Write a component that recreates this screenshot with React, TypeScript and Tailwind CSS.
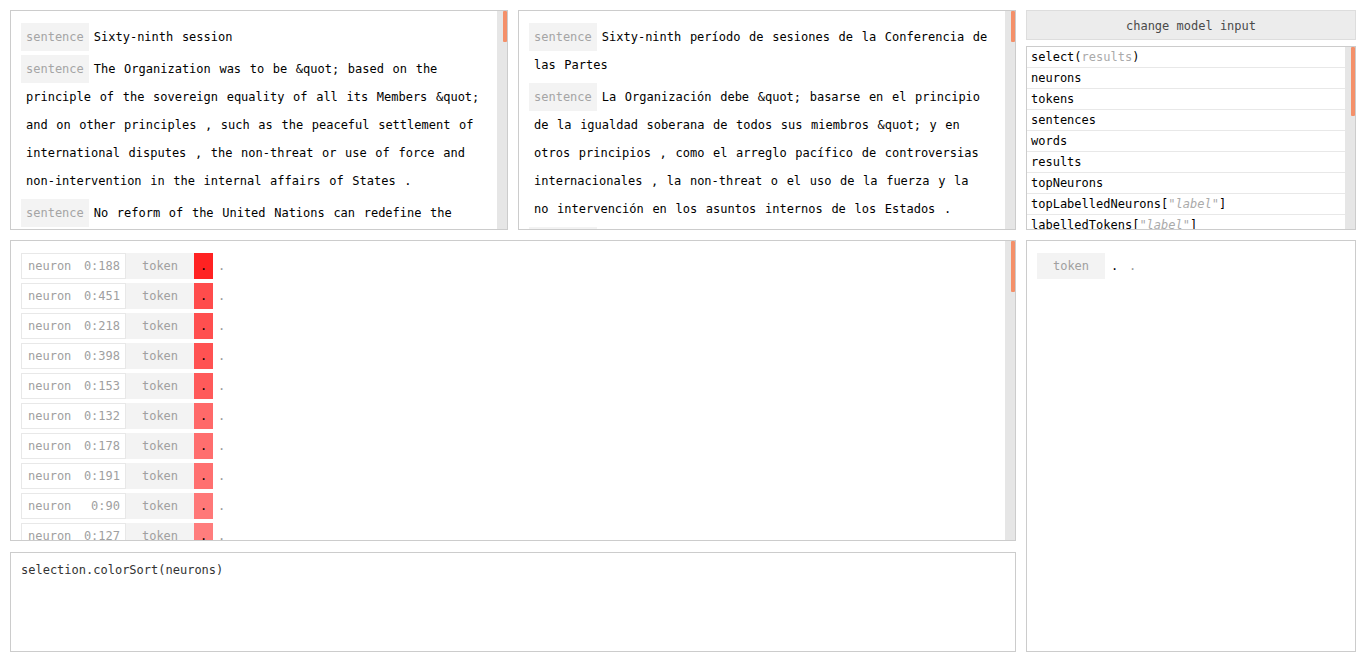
import React from "react";

const sourceSentences = [
  "Sixty-ninth session",
  "The Organization was to be &quot; based on the principle of the sovereign equality of all its Members &quot; and on other principles , such as the peaceful settlement of international disputes , the non-threat or use of force and non-intervention in the internal affairs of States .",
  "No reform of the United Nations can redefine the principle of sovereign equality or the right of peoples to self-determination .",
];

const targetSentences = [
  "Sixty-ninth período de sesiones de la Conferencia de las Partes",
  "La Organización debe &quot; basarse en el principio de la igualdad soberana de todos sus miembros &quot; y en otros principios , como el arreglo pacífico de controversias internacionales , la non-threat o el uso de la fuerza y la no intervención en los asuntos internos de los Estados .",
  "Ninguna reforma de las Naciones Unidas puede redefinir el principio de la igualdad soberana .",
];

const neurons: { id: string; color: string }[] = [
  { id: "0:188", color: "#ff2222" },
  { id: "0:451", color: "#ff4c4c" },
  { id: "0:218", color: "#ff4f4f" },
  { id: "0:398", color: "#ff5252" },
  { id: "0:153", color: "#ff5a5a" },
  { id: "0:132", color: "#ff6969" },
  { id: "0:178", color: "#ff6e6e" },
  { id: "0:191", color: "#ff7070" },
  { id: "0:90", color: "#ff7878" },
  { id: "0:127", color: "#ff7d7d" },
  { id: "0:301", color: "#ff8282" },
  { id: "0:44", color: "#ff8888" },
];

const mono = "font-['DejaVu_Sans_Mono',monospace]";

function Scrollbar({ thumb }: { thumb: string }) {
  return (
    <div className="w-[10px] shrink-0 bg-[#e6e6e6] flex justify-end">
      <div className={`w-[4px] rounded-[1px] bg-[#f4906a] ${thumb}`} />
    </div>
  );
}

function SentencePanel({ sentences }: { sentences: string[] }) {
  return (
    <div className="w-[498px] h-[220px] border border-[#cccccc] bg-white flex">
      <div className="flex-1 overflow-hidden pl-[15px] pr-[16px] pt-[12px] text-[12px] leading-[28px] text-black [word-spacing:1.4px]">
        {sentences.map((s, i) => (
          <div key={i} className="mb-[4px]">
            <span className="inline-block -ml-[5px] mr-[5px] px-[5px] bg-[#f3f3f3] text-[#a5a5a5] [word-spacing:0]">
              sentence
            </span>
            {s}
          </div>
        ))}
      </div>
      <Scrollbar thumb="h-[31px]" />
    </div>
  );
}

const listItems: React.ReactNode[] = [
  <>
    select(<span className="text-[#aaaaaa]">results</span>)
  </>,
  "neurons",
  "tokens",
  "sentences",
  "words",
  "results",
  "topNeurons",
  <>
    topLabelledNeurons[<span className="text-[#aaaaaa]">"<i>label</i>"</span>]
  </>,
  <>
    labelledTokens[<span className="text-[#aaaaaa]">"<i>label</i>"</span>]
  </>,
  "labelledNeurons",
];

export default function App() {
  return (
    <div className={`${mono} text-[12px] bg-white min-h-[661px] p-[10px] flex flex-col gap-[10px]`}>
      <div className="flex gap-[10px] h-[220px]">
        <SentencePanel sentences={sourceSentences} />
        <SentencePanel sentences={targetSentences} />
        <div className="w-[330px] flex flex-col gap-[6px]">
          <button
            type="button"
            className="h-[30px] shrink-0 pt-[1px] bg-[#ececec] border border-[#dddddd] text-[#4a4a4a] text-center"
          >
            change model input
          </button>
          <div className="flex-1 min-h-0 border border-[#cccccc] flex">
            <ul className="flex-1 overflow-hidden">
              {listItems.map((item, i) => (
                <li
                  key={i}
                  className="h-[21px] leading-[20px] pl-[4px] border-b border-[#e8e8e8] text-black whitespace-nowrap"
                >
                  {item}
                </li>
              ))}
            </ul>
            <Scrollbar thumb="h-[69px]" />
          </div>
        </div>
      </div>

      <div className="flex gap-[10px]">
        <div className="w-[1006px] flex flex-col gap-[11px]">
          <div className="h-[301px] border border-[#cccccc] flex">
            <div className="flex-1 overflow-hidden pl-[10px] pt-[12px]">
              {neurons.map((n) => (
                <div key={n.id} className="flex h-[26px] mb-[4px] leading-[26px]">
                  <div className="w-[105px] border border-[#e8e8e8] pl-[6px] pr-[5px] flex justify-between items-center text-[#a0a0a0]">
                    <span>neuron</span>
                    <span>{n.id}</span>
                  </div>
                  <div className="w-[68px] bg-[#f3f3f3] text-center text-[#a0a0a0]">token</div>
                  <div className="w-[19px] text-center text-black" style={{ backgroundColor: n.color }}>
                    .
                  </div>
                  <div className="ml-[5px] text-[#999999]">.</div>
                </div>
              ))}
            </div>
            <Scrollbar thumb="h-[51px]" />
          </div>
          <div className="h-[100px] border border-[#cccccc] px-[10px] pt-[10px] text-[#333333] leading-[15px]">
            selection.colorSort(neurons)
          </div>
        </div>

        <div className="w-[330px] h-[412px] border border-[#cccccc] pl-[10px] pt-[12px]">
          <div className="flex h-[26px] leading-[26px]">
            <div className="w-[68px] bg-[#f3f3f3] text-center text-[#a0a0a0]">token</div>
            <div className="w-[19px] text-center text-black">.</div>
            <div className="ml-[5px] text-[#999999]">.</div>
          </div>
        </div>
      </div>
    </div>
  );
}
